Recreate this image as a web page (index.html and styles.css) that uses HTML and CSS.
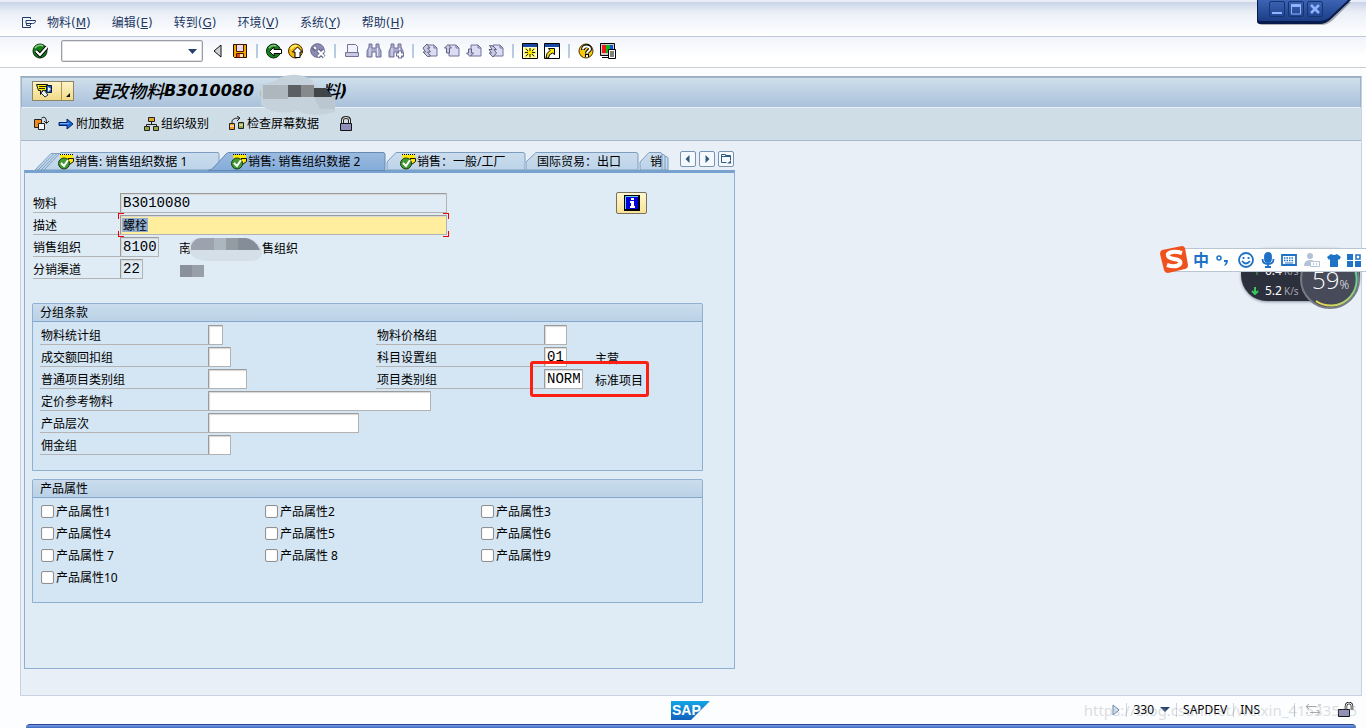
FILE: index.html
```html
<!DOCTYPE html>
<html lang="zh-CN">
<head>
<meta charset="utf-8">
<title>更改物料</title>
<link rel="stylesheet" href="styles.css">
</head>
<body>
<svg class="defs" aria-hidden="true">
  <defs>
    <linearGradient id="tabFill" x1="0" y1="0" x2="0" y2="1"><stop offset="0" stop-color="#cbdded"/><stop offset="1" stop-color="#bcd3e9"/></linearGradient>
    <linearGradient id="tabOn" x1="0" y1="0" x2="0" y2="1"><stop offset="0" stop-color="#9bbbe0"/><stop offset="1" stop-color="#84acd9"/></linearGradient>
    <linearGradient id="capFill" x1="0" y1="0" x2="0" y2="1"><stop offset="0" stop-color="#3c64b4"/><stop offset="1" stop-color="#1b3d86"/></linearGradient>
    <linearGradient id="sapFill" x1="0" y1="0" x2="0" y2="1"><stop offset="0" stop-color="#12a5e3"/><stop offset="1" stop-color="#1461bd"/></linearGradient>
    <linearGradient id="ringFill" x1="0" y1="1" x2="1" y2="0"><stop offset="0" stop-color="#f5d94d"/><stop offset="1" stop-color="#4fd0a0"/></linearGradient>
    <symbol id="doc" viewBox="0 0 16 16"><path d="M5 2h7l3 3v8H5z" fill="#dcdcf4" stroke="#73739a"/><path d="M12 2v3h3" fill="none" stroke="#73739a"/></symbol>
    <symbol id="status" viewBox="0 0 18 16"><path d="M3 1h13v5H4z" fill="#ffe800"/><path d="M3 .500h14" stroke="#000" stroke-dasharray="1 1"/><path d="M11 4.500h5.500v3l-4 3z" fill="#ffe800" stroke="#111"/><circle cx="7" cy="9.500" r="5.500" fill="#439a35" stroke="#183d14"/><path d="M4 9l3 3 4-6" fill="none" stroke="#fff" stroke-width="2"/></symbol>
    <symbol id="bino" viewBox="0 0 16 16"><path d="M3 1h3v4h4V1h3v3l2 4v6h-5V9H6v5H1V8l2-4z" fill="#a9a9cd" stroke="#73739a"/><path d="M4 5v8M11.500 5v8" stroke="#e6e6f8"/></symbol>
  </defs>
</svg>

<nav class="menubar" aria-label="菜单">
  <svg class="menu-icon" width="16" height="14" viewBox="0 0 16 14" fill="none" stroke="#223763"><path d="M9.500 3V1.500h-8v10h8V10"/><path d="M11.500 7.500H5v-3h9.500c0 2-1 3-3 3zM5.500 7.500v2H9l1-2"/></svg>
  <button class="menu">物料(<u>M</u>)</button>
  <button class="menu">编辑(<u>E</u>)</button>
  <button class="menu">转到(<u>G</u>)</button>
  <button class="menu">环境(<u>V</u>)</button>
  <button class="menu">系统(<u>Y</u>)</button>
  <button class="menu">帮助(<u>H</u>)</button>
</nav>

<div class="toolbar">
  <button class="tool" aria-label="确认"><svg viewBox="0 0 16 16"><circle cx="8" cy="8" r="7" fill="#167c19" stroke="#042f08"/><path d="M3 5a6 6 0 0 1 8-2" fill="none" stroke="#88cf82" stroke-width="1.500"/><path d="M4 8l4 4 7-8" fill="none" stroke="#000" stroke-width="4"/><path d="M4 8l4 4 7-8" fill="none" stroke="#fff" stroke-width="2.200"/></svg></button>
  <div class="command">
    <input class="command-input" aria-label="命令">
    <svg class="command-arrow" width="9" height="6" viewBox="0 0 9 6"><path d="M0 1h9L4.500 6z" fill="#26406f"/></svg>
  </div>
  <button class="tool" aria-label="收起"><svg viewBox="0 0 16 16"><path d="M11 2v12L4 8z" fill="#d2d2d2" stroke="#111"/></svg></button>
  <button class="tool" aria-label="保存"><svg viewBox="0 0 16 16"><path d="M1.500 1.500h13v13h-12l-1-1z" fill="#f0a800" stroke="#2b0900"/><path d="M4.500 1.500h7v7h-7z" fill="#ecdcef" stroke="#52180a"/><path d="M4.500 10.500h7v4h-7z" fill="#d64b17" stroke="#4b1000"/><path d="M8 11h3v3H8z" fill="#ffe9b0"/></svg></button>
  <span class="sep"></span>
  <button class="tool" aria-label="返回"><svg viewBox="0 0 16 16"><circle cx="7.500" cy="8" r="7" fill="#17801b" stroke="#032806"/><path d="M3 5a6 6 0 0 1 7-2" fill="none" stroke="#85c881" stroke-width="1.500"/><path d="M3.500 8.500L8 4v2.500h7.500v4H8V13z" fill="#fff" stroke="#000"/></svg></button>
  <button class="tool" aria-label="退出"><svg viewBox="0 0 16 16"><circle cx="7.500" cy="8" r="7" fill="#f4b70b" stroke="#4d2b00"/><path d="M3 6a5 5 0 0 1 6-3" fill="none" stroke="#fff26b" stroke-width="2"/><path d="M9.500 4l5 5H12v5.500H7V9H4.500z" fill="#fff" stroke="#000"/></svg></button>
  <button class="tool" aria-label="取消"><svg viewBox="0 0 16 16"><circle cx="7.500" cy="7.500" r="6.800" fill="#8a8ab2" stroke="#666688"/><path d="M3 4l3 3M8 7l6 7M14 7l-6 7" stroke="#666688" stroke-width="4"/><path d="M4 4l2 2M8 7.500l6 6M14 7.500l-6 6" stroke="#fff" stroke-width="2"/></svg></button>
  <span class="sep"></span>
  <button class="tool" aria-label="打印"><svg viewBox="0 0 16 16"><path d="M3.500 1.500h8l2 2v6h-10z" fill="#f2f2ff" stroke="#73739a"/><path d="M1.500 9.500h13v4h-13z" fill="#c9c9e4" stroke="#73739a"/></svg></button>
  <button class="tool" aria-label="查找"><svg><use href="#bino"/></svg></button>
  <button class="tool" aria-label="查找下一个"><svg viewBox="0 0 16 16"><use href="#bino"/><path d="M12 7.500v8M8 11.500h8" stroke="#73739a" stroke-width="4"/><path d="M12 8.500v6M9 11.500h6" stroke="#fff" stroke-width="2"/></svg></button>
  <span class="sep"></span>
  <button class="tool" aria-label="第一页"><svg viewBox="0 0 16 16"><use href="#doc"/><path d="M1 5l4-4 3 4H5.500l3 4H5.500l3 4-3 .500L1 9h2.500z" fill="#c9c9e4" stroke="#62627f"/></svg></button>
  <button class="tool" aria-label="上一页"><svg viewBox="0 0 16 16"><use href="#doc"/><path d="M.500 5L4 1.500 7.500 5h-2v5h-3V5z" fill="#c9c9e4" stroke="#62627f"/></svg></button>
  <button class="tool" aria-label="下一页"><svg viewBox="0 0 16 16"><use href="#doc"/><path d="M2.500 6h3v4h2L4 13.500.500 10h2z" fill="#c9c9e4" stroke="#62627f"/></svg></button>
  <button class="tool" aria-label="最后一页"><svg viewBox="0 0 16 16"><use href="#doc"/><path d="M1.500 2.500L5 3l3.500 3.500H6L8.500 10 5 14l-4-4h2.500L1 6.500h3z" fill="#c9c9e4" stroke="#62627f"/></svg></button>
  <span class="sep"></span>
  <button class="tool" aria-label="新建会话"><svg viewBox="0 0 16 16"><path d="M.500.500h15v15H.500z" fill="#fffde0" stroke="#000"/><path d="M1 1h14v3H1z" fill="#1649a5"/><path d="M8 5v10M2 9.500h12M3 5l10 9M13 5L3 14" stroke="#f5e600" stroke-width="2"/><path d="M8 5v3M8 11v3M3 9.500h3M10 9.500h3M4 6l2 2M12 6l-2 2M4 13l2-2M12 13l-2-2" stroke="#222"/></svg></button>
  <button class="tool" aria-label="快捷方式"><svg viewBox="0 0 16 16"><path d="M.500.500h15v15H.500z" fill="#fff" stroke="#000"/><path d="M1 1h14v3H1z" fill="#1649a5"/><path d="M4.500 5.500h6v6L8.500 10q-4 1-4 5H2q0-5 4-7.500z" fill="#ffe800" stroke="#000"/></svg></button>
  <span class="sep"></span>
  <button class="tool" aria-label="帮助"><svg viewBox="0 0 16 16"><circle cx="8" cy="8" r="7" fill="#f9c90a" stroke="#4b3100"/><path d="M5 7c0-5 7-5 7-1 0 2-3 2-3 4.500M9 11v3" fill="none" stroke="#000" stroke-width="4"/><path d="M5 6.500c0-4 7-4 7-.5 0 2-3 2-3 4.500M9 12v2" fill="none" stroke="#fff" stroke-width="2"/></svg></button>
  <button class="tool" aria-label="布局"><svg viewBox="0 0 16 16"><path d="M.500.500h14v12H.500z" fill="#ccc" stroke="#000"/><path d="M2 2h4v8H2z" fill="#ed1b16"/><path d="M6 2h4v8H6z" fill="#0ab91e"/><path d="M10 2h3v5h-3z" fill="#124cdd"/><path d="M2 14.500h8" stroke="#000"/><path d="M8.500 6.500h7v9h-7z" fill="#fff" stroke="#000"/><path d="M10 9h4M10 11h4M10 13h4" stroke="#000"/></svg></button>
</div>

<div class="window-cap">
  <svg class="cap-shape" width="112" height="28" viewBox="0 0 112 28"><path d="M2 0h92L76 18q-5 5-12 5H5q-3 0-3-3z" transform="translate(1 2)" fill="#000" opacity=".3"/><path d="M1 0h94L75 19q-5 5-11 5H4q-3 0-3-3z" fill="#091b4c"/><path d="M2 0h90L73 18q-4 3-9 3H5q-3 0-3-2z" fill="url(#capFill)"/></svg>
  <div class="cap-buttons">
    <button class="cap-button" aria-label="最小化"><svg viewBox="0 0 14 14"><path d="M2 11h10" stroke="#8eb4ff" stroke-width="2"/></svg></button>
    <button class="cap-button" aria-label="最大化"><svg viewBox="0 0 14 14"><path d="M2.500 3v9h9V3z" fill="none" stroke="#8eb4ff"/><path d="M2 3.500h10" stroke="#8eb4ff" stroke-width="3"/></svg></button>
    <button class="cap-button" aria-label="关闭"><svg viewBox="0 0 14 14"><path d="M3 3l8 8M11 3l-8 8" stroke="#8eb4ff" stroke-width="2.500"/></svg></button>
  </div>
</div>

<main class="window">
  <header class="titlebar">
    <button class="title-button" aria-label="服务">
      <svg width="42" height="20" viewBox="0 0 42 20"><path d="M4.500 3.500h11l-1 6h-4l-2 4v-4h-2z" fill="#ffef00" stroke="#111"/><path d="M7 5.500h7M7 7.500h6" stroke="#222"/><path d="M14.500 4.500h5v7h-5z" fill="#1b62c6" stroke="#08152c"/><path d="M16 6l3 2-3 3z" fill="#fff"/><path d="M9 12l3-3 4 5-3 2z" fill="#e8edf6" stroke="#233"/><path d="M29.500 1v18" stroke="#ac9550"/><path d="M38 12v4h-4z" fill="#111"/></svg>
    </button>
    <h1 class="title">更改物料<span class="title-latin">B3010080 (</span><span class="title-gap"></span>料<span class="title-latin">)</span>
      <svg class="title-mask" width="82" height="42" viewBox="0 0 82 42"><path d="M0 10q14-1 18-6Q34-3 50 5l5 7q12 4 19 16v10q-20 6-38-1-22 5-36-6z" fill="#c5d2dc"/><path d="M2 11h25v14H2z" fill="#aeb7be"/><path d="M27 11h13v12H27z" fill="#5c5f63"/><path d="M40 11h13v12H40z" fill="#87898c"/><path d="M53 14h12l6 9H53z" fill="#424548"/><path d="M53 23h20l1 12H59z" fill="#bac7d0"/></svg>
    </h1>
  </header>

  <div class="actions">
    <button class="action" aria-label="其他物料"><svg width="16" height="16" viewBox="0 0 16 16"><path d="M1.500 3.500h7v8h-7z" fill="#f48a19" stroke="#222"/><path d="M5.500 7.500h6v6h-6z" fill="#f5f8fa" stroke="#222"/><path d="M8.500 2q5-3 5 5M11 5l2.500 2.500L16 5" fill="none" stroke="#222"/></svg></button>
    <button class="action"><svg width="17" height="16" viewBox="0 0 17 16"><path d="M1 6.500h8V3l6 5-6 5V9.500H1z" fill="#1765dd" stroke="#08225d"/><path d="M2 7.500h9" stroke="#75b0ff"/></svg>附加数据</button>
    <button class="action"><svg width="17" height="16" viewBox="0 0 17 16"><path d="M8.500 6v3M3.500 11V8.500h10V11" fill="none" stroke="#222"/><path d="M5.500 1.500h6v4h-6z" fill="#e3a825" stroke="#222"/><path d="M1.500 10.500h5v4h-5zM10.500 10.500h5v4h-5z" fill="#9ba642" stroke="#222"/></svg>组织级别</button>
    <button class="action"><svg width="18" height="16" viewBox="0 0 18 16"><path d="M4 7q-1-5 7-5M9 0l3 2-3 3" fill="none" stroke="#222"/><path d="M1.500 7.500h5v6h-5z" fill="#f29b1e" stroke="#222"/><path d="M10.500 6.500h5v6h-5z" fill="#9ba642" stroke="#222"/><path d="M2 10h4M11 9h4" stroke="#fff"/></svg>检查屏幕数据</button>
    <button class="action" aria-label="锁定"><svg width="16" height="16" viewBox="0 0 16 16"><path d="M4.500 7V4q0-2.500 3.500-2.500T11.500 4v3" fill="none" stroke="#222" stroke-width="3"/><path d="M4.500 7V4q0-2.500 3.500-2.500T11.500 4v3" fill="none" stroke="#eee"/><path d="M2.500 7.500h11v7h-11z" fill="#8f91bb" stroke="#151515"/></svg></button>
  </div>

  <div class="content">
    <div class="tab-area">
      <div class="tabs">
        <button class="tab tab-first"><svg class="tab-bg" width="186" height="19" viewBox="0 0 186 19"><g fill="url(#tabFill)" stroke="#7d9ebf"><path d="M1 18L17 1.500h10L10 18z"/><path d="M4 18L20 1.500h10L13 18z"/><path d="M7 18L23 1.500h10L16 18z"/><path d="M10 18L26.500.500H184q1 0 1 2V18z"/></g></svg><svg class="tab-icon"><use href="#status"/></svg>销售: 销售组织数据 1</button>
        <button class="tab tab-active"><svg class="tab-bg" width="178" height="19" viewBox="0 0 178 19"><path d="M0 18.500Q4 18 7 14L18 2q1-1.500 4-1.500H175q2 0 2 2v16z" fill="url(#tabOn)" stroke="#6589b3"/></svg><svg class="tab-icon"><use href="#status"/></svg>销售: 销售组织数据 2</button>
        <button class="tab tab-general"><svg class="tab-bg" width="141" height="19" viewBox="0 0 141 19"><path d="M1 18v-8L10 .500H137q2 0 2 2V18z" fill="url(#tabFill)" stroke="#7d9ebf"/></svg><svg class="tab-icon"><use href="#status"/></svg>销售：一般/工厂</button>
        <button class="tab tab-export"><svg class="tab-bg" width="114" height="19" viewBox="0 0 114 19"><path d="M0 18v-8L10 .500H110q2 0 2 2V18z" fill="url(#tabFill)" stroke="#7d9ebf"/></svg>国际贸易：出口</button>
        <button class="tab tab-last"><svg class="tab-bg" width="32" height="19" viewBox="0 0 32 19"><g fill="url(#tabFill)" stroke="#7d9ebf"><path d="M20 4.500h7q2 0 2 2V18h-9z"/><path d="M20 2.500h4q2 0 2 2V18h-6z"/><path d="M1 18v-8L10 .500H21q2 0 2 2V18z"/></g></svg>销</button>
        <div class="tab-nav">
          <button class="nav-button" aria-label="向左"><svg viewBox="0 0 14 14"><path d="M8.500 3v8L4.500 7z" fill="#31587e"/></svg></button>
          <button class="nav-button" aria-label="向右"><svg viewBox="0 0 14 14"><path d="M5.500 3v8l4-4z" fill="#31587e"/></svg></button>
          <button class="nav-button" aria-label="标签列表"><svg viewBox="0 0 14 14" fill="none" stroke="#31587e"><path d="M7.500 10.500h-5v-8h4v1h5v5M2.500 4.500h9"/><path d="M8 11.500h4v-3z" fill="#31587e" stroke="none"/></svg></button>
        </div>
      </div>

      <section class="panel">
        <div class="head">
          <div class="head-fields">
            <div class="row"><label class="label" for="material">物料</label><input class="field field-read field-long" id="material" value="B3010080" readonly></div>
            <div class="row"><label class="label" for="desc">描述</label><span class="focus-box"><input class="field field-focus field-long" id="desc" value="螺栓"></span></div>
            <div class="row"><label class="label" for="org">销售组织</label><input class="field field-read w4" id="org" value="8100" readonly><span class="note">南<span class="org-gap"></span>售组织<svg class="org-mask" width="86" height="44" viewBox="0 0 86 44"><path d="M10 12q0-10 12-10h44q10 0 16 10l1 6q-2 7-12 7H27q-17-2-17-13z" fill="#d5dfe8"/><path d="M12 10q3-8 10-8h13v12H12z" fill="#9da3ae"/><path d="M35 2h12v12H35z" fill="#abb6bf"/><path d="M47 2h12v12H47z" fill="#939ba3"/><path d="M59 2h8q10 2 14 12H59z" fill="#858e98"/><path d="M1 29h12v12H1z" fill="#8a919c"/><path d="M13 29h12v12H13z" fill="#989fa9"/></svg></span></div>
            <div class="row"><label class="label" for="channel">分销渠道</label><input class="field field-read w2" id="channel" value="22" readonly></div>
          </div>
          <button class="info" aria-label="信息"><svg width="16" height="16" viewBox="0 0 16 16"><path d="M1 1h14v14H1z" fill="#0001dd" stroke="#000" stroke-width="2"/><path d="M1.500 14V1.500H14" fill="none" stroke="#64d5ee"/><path d="M7 3h3v2H7zM6 6h4v5h1v2H6v-2h1V8H6z" fill="#fff"/></svg></button>
        </div>

        <section class="group">
          <h2 class="group-title">分组条款</h2>
          <div class="terms">
            <div class="rows">
              <div class="row"><label class="label label-wide" for="g1">物料统计组</label><input class="field w1" id="g1"></div>
              <div class="row"><label class="label label-wide" for="g2">成交额回扣组</label><input class="field w2" id="g2"></div>
              <div class="row"><label class="label label-wide" for="g3">普通项目类别组</label><input class="field w4" id="g3"></div>
              <div class="row"><label class="label label-wide" for="g4">定价参考物料</label><input class="field w18" id="g4"></div>
              <div class="row"><label class="label label-wide" for="g5">产品层次</label><input class="field w15" id="g5"></div>
              <div class="row"><label class="label label-wide" for="g6">佣金组</label><input class="field w2" id="g6"></div>
            </div>
            <div class="rows">
              <div class="row"><label class="label label-wide" for="p1">物料价格组</label><input class="field w2" id="p1"></div>
              <div class="row"><label class="label label-wide" for="p2">科目设置组</label><span class="slot"><input class="field w2" id="p2" value="01"></span><span>主营</span></div>
              <div class="row"><label class="label label-wide" for="p3">项目类别组</label><span class="slot"><input class="field w4" id="p3" value="NORM"></span><span>标准项目</span></div>
            </div>
          </div>
          <div class="callout"></div>
        </section>

        <section class="group">
          <h2 class="group-title">产品属性</h2>
          <div class="checks">
            <label class="check"><input type="checkbox" class="box">产品属性1</label>
            <label class="check"><input type="checkbox" class="box">产品属性2</label>
            <label class="check"><input type="checkbox" class="box">产品属性3</label>
            <label class="check"><input type="checkbox" class="box">产品属性4</label>
            <label class="check"><input type="checkbox" class="box">产品属性5</label>
            <label class="check"><input type="checkbox" class="box">产品属性6</label>
            <label class="check"><input type="checkbox" class="box">产品属性 7</label>
            <label class="check"><input type="checkbox" class="box">产品属性 8</label>
            <label class="check"><input type="checkbox" class="box">产品属性9</label>
            <label class="check"><input type="checkbox" class="box">产品属性10</label>
          </div>
        </section>
      </section>
    </div>
  </div>
</main>

<footer class="statusbar">
  <svg class="sap" width="40" height="19" viewBox="0 0 40 19" aria-label="SAP"><path d="M0 0h39L20 19H0z" fill="url(#sapFill)"/><text class="sap-text" x="1" y="14">SAP</text></svg>
  <div class="status-items">
    <svg width="8" height="12" viewBox="0 0 8 12"><path d="M1 1v10l6-5z" fill="#dfe9f5" stroke="#6484ae"/></svg>
    <span class="status-sep"></span>
    <span class="client">330</span>
    <svg width="10" height="6" viewBox="0 0 10 6"><path d="M0 0h10L5 5z" fill="#26406f"/></svg>
    <span class="status-sep"></span>
    <span class="server">SAPDEV</span>
    <span class="status-sep"></span>
    <span class="mode">INS</span>
    <span class="status-sep status-sep-last"></span>
    <svg width="16" height="12" viewBox="0 0 16 12" fill="none" stroke="#aaa"><path d="M1 2.500h10M4 0L1 2.500 4 5M15 8.500H5M12 6l3 2.500L12 11M13 1h3M1 9h2"/></svg>
    <svg class="lock" width="18" height="16" viewBox="0 0 18 16"><path d="M9 7V4q0-3 3-3t3 3v4" fill="none" stroke="#222" stroke-width="2.500"/><path d="M9 7V4q0-3 3-3t3 3v4" fill="none" stroke="#eee"/><path d="M1.500 7.500h11v7h-11z" fill="#8f91bb" stroke="#151515"/></svg>
  </div>
  <span class="watermark">https://blog.csdn.net/weixin_41533545</span>
</footer>
<div class="bottom-edge"></div>

<aside class="speed">
  <div class="speed-rows">
    <span class="speed-row"><span class="up">↑</span>0.4<span class="unit">K/s</span></span>
    <span class="speed-row"><svg class="down" width="8" height="8" viewBox="0 0 8 8"><path d="M4 0v7M1 4l3 3 3-3" fill="none" stroke="#35c759" stroke-width="2"/></svg>5.2<span class="unit">K/s</span></span>
  </div>
  <div class="dial"><svg class="ring" width="60" height="62" viewBox="0 0 60 62"><circle cx="30" cy="31" r="29" fill="#474b59" stroke="#777b86" stroke-width="2"/><path d="M54 20A26 26 0 0 1 16 53" fill="none" stroke="url(#ringFill)" stroke-width="2"/></svg><span class="dial-value">59<span class="dial-unit">%</span></span></div>
</aside>
<aside class="ime">
  <svg class="ime-logo" width="30" height="28" viewBox="0 0 30 28"><path d="M3 4l20-4q2 0 3 2l3 17q0 3-3 4L9 27q-3 0-4-3L1 8q0-3 2-4z" fill="#f0521e"/><path d="M23 7q-10-3-14 1-1 4 6 5 8 1 6 5-4 4-13 1" fill="none" stroke="#fff" stroke-width="4"/></svg>
  <span class="ime-text">中</span>
  <svg width="16" height="16" viewBox="0 0 16 16"><circle cx="4" cy="6" r="2" fill="none" stroke="#1f72c6" stroke-width="1.500"/><path d="M9 8h4q0 5-4 6l2-4H9z" fill="#1f72c6"/></svg>
  <svg width="18" height="18" viewBox="0 0 18 18" fill="none" stroke="#1f72c6" stroke-width="1.800"><circle cx="9" cy="9" r="7"/><path d="M6.500 6v2M11.500 6v2M5 10q4 5 8 0"/></svg>
  <svg width="14" height="18" viewBox="0 0 14 18" fill="none" stroke="#1f72c6" stroke-width="1.800"><rect x="4" y="2" width="6" height="9" rx="3" fill="#1f72c6"/><path d="M1.500 8q0 5 5.500 5t5.500-5M7 13v3M4 16h6"/></svg>
  <svg width="16" height="14" viewBox="0 0 16 14"><path d="M1 2h14v10H1z" fill="none" stroke="#1f72c6" stroke-width="1.800"/><path d="M3 5h10M3 7.500h10" stroke="#1f72c6" stroke-width="1.500" stroke-dasharray="1.500 1"/><path d="M4 10h8" stroke="#1f72c6"/></svg>
  <svg width="18" height="16" viewBox="0 0 18 16" fill="#b3c2d6"><circle cx="7" cy="4" r="3"/><path d="M1 14q0-6 6-6 3 0 4 1H7v5z"/><path d="M7.500 9.500h9v5h-9zM10.500 11v2M13.500 11v2" fill="#fff" stroke="#b3c2d6"/></svg>
  <svg width="14" height="16" viewBox="0 0 14 16"><path d="M4 2q3 2 6 0l4 3-2 3-1-1v8H3V7L2 8 0 5z" fill="#1f72c6"/></svg>
  <svg width="14" height="14" viewBox="0 0 14 14" fill="#1f72c6"><path d="M0 1h6v6H0zM0 8h6v6H0zM8 8h6v6H8z"/><path d="M9 2h4v4H9z" fill="#fff" stroke="#1f72c6" stroke-width="1.500"/></svg>
</aside>
</body>
</html>
```

FILE: styles.css
```css
* { box-sizing: border-box; }
body {
  margin: 0;
  min-height: 100vh;
  position: relative;
  display: flex;
  flex-direction: column;
  overflow: hidden;
  background: #fcfdfe;
  color: #000;
  font: 12px/16px "Noto Sans", "Noto Sans CJK SC", sans-serif;
}
button, input { font: inherit; color: inherit; margin: 0; padding: 0; }
button { border: 0; background: none; white-space: nowrap; }
svg { display: block; flex: none; }
.defs { position: absolute; width: 0; height: 0; }

.menubar {
  display: flex;
  align-items: center;
  gap: 21px;
  height: 37px;
  padding: 7px 21px 0;
  border-top: 2px solid #e9eef6;
  border-bottom: 1px solid #c0c8d8;
  background: linear-gradient(#c9d4e8, #eaeff7 30%, #fff);
}
.menu-icon { margin-right: -11px; }
.menu { color: #223763; font-family: "DejaVu Sans", "Noto Sans CJK SC", sans-serif; }

.toolbar {
  display: flex;
  align-items: center;
  height: 31px;
  padding: 0 29px 2px;
  border-bottom: 1px solid #cacdd4;
  background: linear-gradient(#f1f4fa, #fff 70%);
}
.tool { width: 22px; height: 22px; padding: 3px; }
.tool svg { width: 16px; height: 16px; }
.command { display: flex; position: relative; margin: 0 4px 0 10px; }
.command-input { width: 142px; height: 22px; border: 1px solid #9a9da3; border-radius: 2px; background: #fff; box-shadow: inset 0 0 0 1px #dfe1e4; }
.command-arrow { position: absolute; right: 6px; top: 8px; }
.sep { width: 2px; height: 14px; margin: 0 5px; background: #b6cbe0; }

.window-cap { position: absolute; top: 0; right: -2px; width: 112px; height: 28px; }
.cap-shape { position: absolute; inset: 0; }
.cap-buttons { position: relative; display: flex; gap: 3px; padding: 1px 0 0 13px; }
.cap-button { width: 16px; height: 16px; border: 1px solid #17346f; border-radius: 2px; }

.window {
  flex: 1;
  display: flex;
  flex-direction: column;
  margin: 8px 4px 0 20px;
  border: 1px solid #c9d2e2;
  border-top: 1px solid #9badc0;
  background: #e8eff7;
}
.titlebar {
  display: flex;
  align-items: center;
  gap: 18px;
  height: 31px;
  padding: 0 10px 4px;
  border: 1px solid #9fb3c7;
  border-bottom: 1px solid #eaf2f8;
  background: linear-gradient(#cfdfeb, #a9c1db);
}
.title-button { height: 20px; background: linear-gradient(#fff6cb, #f0d883); outline: 1px solid #8b836a; outline-offset: -1px; }
.title { position: relative; display: flex; margin: 0; font-size: 18px; line-height: 26px; font-weight: 500; font-style: italic; white-space: pre; }
.title-latin { font: bold italic 16px/26px "DejaVu Sans", sans-serif; }
.title-gap { width: 55px; }
.title-mask { position: absolute; left: 169px; top: -4px; }

.actions {
  display: flex;
  align-items: center;
  gap: 19px;
  height: 33px;
  padding: 0 12px;
  border-bottom: 1px solid #a7b8ca;
  background: #cfdde7;
}
.action { display: flex; align-items: center; gap: 1px; }
.action:first-child { margin-right: -10px; }

.content { flex: 1; padding: 11px 3px 26px; }
.tab-area { display: flex; flex-direction: column; width: 711px; height: 100%; }
.tabs { display: flex; height: 18px; padding-left: 10px; }
.tab { position: relative; z-index: 0; display: flex; align-items: center; flex: none; height: 18px; padding-top: 2px; }
.tab-bg { position: absolute; left: 0; top: 0; z-index: -1; }
.tab-icon { width: 18px; height: 16px; }
.tab-first { width: 186px; padding-left: 23px; }
.tab-active { width: 178px; margin-left: -12px; padding-left: 22px; z-index: 1; }
.tab-general { width: 140px; padding-left: 13px; }
.tab-export { width: 113px; padding-left: 11px; }
.tab-last { width: 32px; padding-left: 11px; }
.tab-nav { display: flex; gap: 3px; margin: -1px 1px 0 auto; }
.nav-button { width: 16px; height: 16px; border: 1px solid #7693b1; border-radius: 2px; background: #f5f9fd; }

.panel {
  flex: 1;
  padding: 20px 31px 65px 7px;
  border: 1px solid #8fb0d1;
  border-top: 3px solid #77a2cf;
  background: #dfebf5;
}
.head { display: flex; justify-content: space-between; align-items: flex-start; padding: 0 56px 0 1px; margin-bottom: 24px; }
.head-fields, .rows { display: flex; flex-direction: column; gap: 2px; }
.row { display: flex; align-items: flex-end; height: 20px; }
.label { flex: none; width: 87px; height: 20px; padding: 2px 0 0; line-height: 18px; border-bottom: 1px solid #b4b4b4; }
.label-wide { width: 168px; padding-left: 1px; }
.field {
  flex: none;
  height: 20px;
  padding: 0 2px;
  border: 1px solid #9b9b9b;
  border-right-color: #b2b2b2;
  border-bottom-color: #b2b2b2;
  border-radius: 1px;
  background: #fff;
  box-shadow: inset 1px 1px 1px #d8d8d8;
  font: 14px/18px "Liberation Mono", "Noto Sans CJK SC", monospace;
}
.field-read { background: #dfebf5; }
.field-long { width: 327px; }
.field-focus { font-size: 12px; background: linear-gradient(#91aed1, #91aed1) 1px 2px / 26px 14px no-repeat, #ffee9e; }
.focus-box {
  display: flex;
  margin: -2px;
  padding: 2px;
  background:
    linear-gradient(#e00, #e00) 0 0 / 6px 1px, linear-gradient(#e00, #e00) 0 0 / 1px 6px,
    linear-gradient(#e00, #e00) 100% 0 / 6px 1px, linear-gradient(#e00, #e00) 100% 0 / 1px 6px,
    linear-gradient(#e00, #e00) 0 100% / 6px 1px, linear-gradient(#e00, #e00) 0 100% / 1px 6px,
    linear-gradient(#e00, #e00) 100% 100% / 6px 1px, linear-gradient(#e00, #e00) 100% 100% / 1px 6px;
  background-repeat: no-repeat;
}
.w1 { width: 15px; }
.w2 { width: 23px; }
.w4 { width: 39px; }
.w15 { width: 151px; }
.w18 { width: 223px; }
.note { position: relative; display: flex; margin-left: 20px; }
.org-gap { width: 71px; }
.org-mask { position: absolute; left: 0; top: -5px; }
.info { display: flex; justify-content: center; width: 31px; height: 22px; margin-top: -1px; padding-top: 2px; border: 1px solid #77705b; border-radius: 2px; background: linear-gradient(#fff8d0, #f8e298); }

.group { position: relative; border: 1px solid #8fb0d1; border-radius: 2px 2px 0 0; background: #d4e5f3; }
.group + .group { margin-top: 8px; }
.group-title { margin: 0; height: 18px; padding-left: 7px; font-size: 12px; line-height: 17px; font-weight: 400; border-bottom: 1px solid #86a7cb; background: linear-gradient(#cadced, #bad1e6); }
.terms { display: grid; grid-template-columns: 336px 1fr; padding: 3px 7px 15px; }
.slot { width: 51px; display: flex; }
.callout { position: absolute; left: 497px; top: 57px; width: 119px; height: 36px; border: 3px solid #fb2012; border-radius: 3px; }
.checks { display: grid; grid-template-columns: 224px 216px 1fr; grid-auto-rows: 22px; padding: 3px 8px 13px; }
.check { display: flex; align-items: center; gap: 1px; }
.box { appearance: none; width: 13px; height: 13px; margin: 0 1px 2px 0; border: 1px solid #919191; border-radius: 2px; background: #fff; box-shadow: inset 0 0 1px #bbb; }

.statusbar { position: relative; display: flex; align-items: center; justify-content: space-between; height: 28px; padding: 0 11px 0 671px; }
.sap-text { font: bold 14px "Liberation Sans", sans-serif; fill: #fff; }
.status-items { display: flex; align-items: center; gap: 6px; }
.status-sep { width: 1px; height: 14px; background: #d0d3d8; }
.status-sep-last { margin: 0 4px 0 28px; }
.lock { margin-left: 10px; }
.watermark { position: absolute; right: 9px; top: 4px; font: 15px/20px "Noto Sans", sans-serif; color: #9098a0; opacity: .3; }
.bottom-edge { height: 4px; margin: 0 10px 0 26px; border-top: 1px solid #294896; border-radius: 14px 14px 0 0; background: linear-gradient(#7b9ee8, #3f67c0); }

.ime { position: absolute; right: 0; top: 248px; display: flex; align-items: center; gap: 6px; height: 24px; padding-right: 5px; border: 1px solid #b9c6d2; border-width: 1px 0; background: #fff; }
.ime-logo { margin: 0 -2px 0 -12px; }
.ime-text { font-size: 16px; font-weight: 700; color: #1f72c6; }
.speed { position: absolute; right: 6px; top: 248px; width: 119px; height: 62px; color: #fff; }
.speed-rows { display: flex; flex-direction: column; height: 53px; padding: 13px 0 0 10px; border-radius: 26px; background: #2c2f3c; line-height: 20px; box-shadow: 0 1px 3px #8a94a5; }
.speed-row { display: flex; align-items: center; gap: 2px; }
.up { width: 12px; color: #35c759; }
.down { margin-right: 4px; }
.unit { font-size: 10px; color: #a3a6ae; }
.dial { position: absolute; right: 0; top: 0; width: 60px; height: 62px; }
.ring { position: absolute; inset: 0; }
.dial-value { position: relative; display: block; padding: 18px 0 0 12px; font: 300 24px/28px "Open Sans", sans-serif; white-space: nowrap; }
.dial-unit { font-size: 12px; }
```
